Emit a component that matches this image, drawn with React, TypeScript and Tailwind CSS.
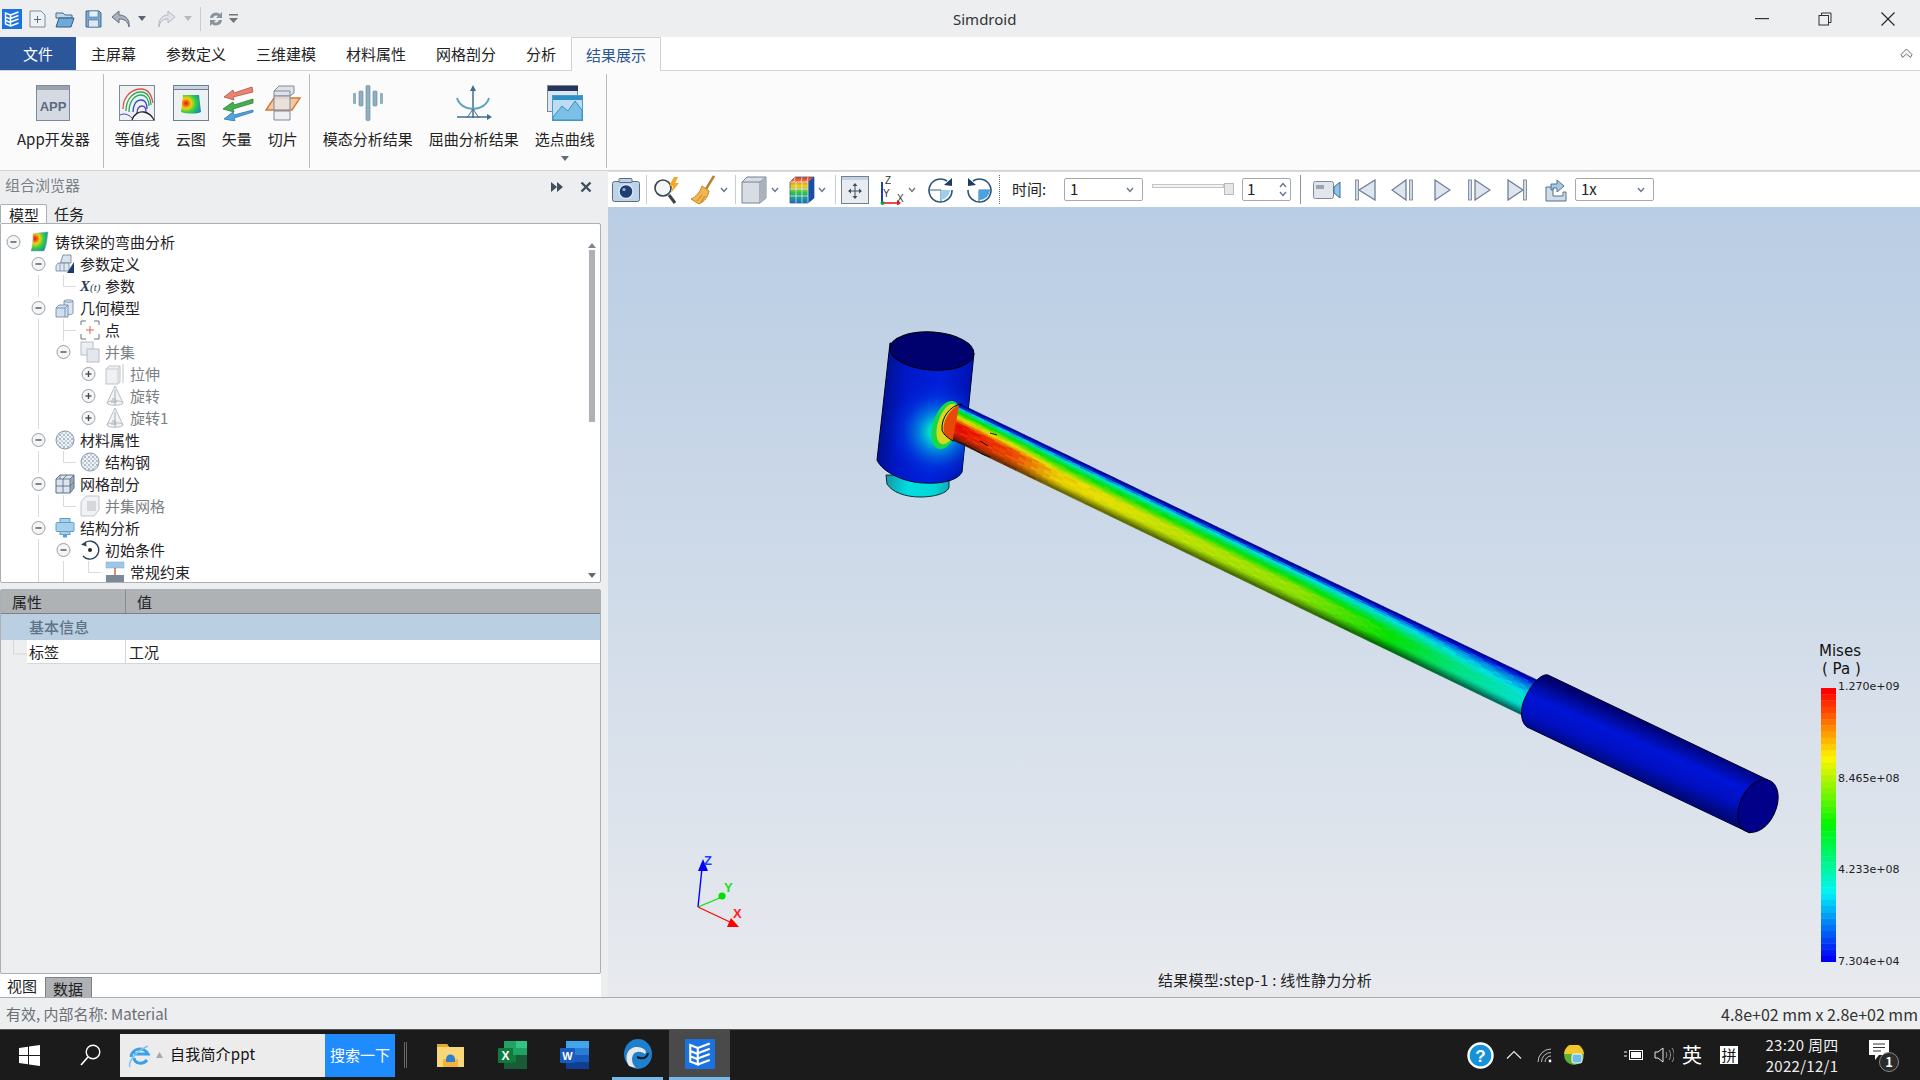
import React from 'react';

type SvgProps = { w: number; h: number; className?: string; children?: React.ReactNode };

const Svg: React.FC<SvgProps> = ({ w, h, className = '', children }) => (
  <svg width={w} height={h} viewBox={`0 0 ${w} ${h}`} className={`shrink-0 ${className}`} fill="none">
    {children}
  </svg>
);

const Chev: React.FC<{ className?: string }> = ({ className = '' }) => (
  <Svg w={8} h={6} className={className}>
    <path d="M1 1l3 3.5L7 1" stroke="#64748b" strokeWidth="1.3" />
  </Svg>
);

/* ---------- stress colours for the model ---------- */
const jet = (v: number, l = 1) => {
  const x = Math.max(0, Math.min(1, v));
  let r = 0;
  let g = 0;
  let b = 0;
  if (x < 0.25) {
    g = x / 0.25;
    b = 1;
  } else if (x < 0.5) {
    g = 1;
    b = 1 - (x - 0.25) / 0.25;
  } else if (x < 0.75) {
    r = (x - 0.5) / 0.25;
    g = 1;
  } else {
    r = 1;
    g = 1 - (x - 0.75) / 0.25;
  }
  return `rgb(${Math.round(r * 235 * l)},${Math.round(g * 225 * l)},${Math.round(b * 225 * l)})`;
};

const lerpTable = (table: number[][], t: number) => {
  for (let i = 1; i < table.length; i++) {
    if (t <= table[i][0]) {
      const [a, av] = table[i - 1];
      const [b, bv] = table[i];
      return av + ((t - a) / (b - a)) * (bv - av);
    }
  }
  return table[table.length - 1][1];
};

const peak = [[0, 1], [0.1, 0.93], [0.18, 0.78], [0.35, 0.72], [0.6, 0.66], [0.75, 0.52], [0.88, 0.36], [1, 0.27]];
const across = [[0, 0], [0.08, 0.04], [0.2, 0.42], [0.35, 0.7], [0.55, 1], [1, 0.96]];

const beamPoint = (t: number, s: number) => {
  const ax = 960 + t * 577;
  const ay = 404 + t * 276;
  const bx = 953 + t * 569;
  const by = 440 + t * 275;
  return [ax + (bx - ax) * s, ay + (by - ay) * s];
};

const beamCells = (() => {
  const cells: { d: string; c: string }[] = [];
  const nt = 90;
  const ns = 18;
  for (let i = 0; i < nt; i++) {
    for (let j = 0; j < ns; j++) {
      const t = (i + 0.5) / nt;
      const s = (j + 0.5) / ns;
      const noise = Math.sin(i * 1.7) * Math.sin(j * 2.3) * 0.025;
      const v = lerpTable(peak, t) * lerpTable(across, s) + noise;
      const light = s > 0.78 ? 1 - ((s - 0.78) / 0.22) * 0.6 : s < 0.1 ? 0.55 + s * 4 : 1;
      const p = [beamPoint(i / nt, j / ns), beamPoint((i + 1) / nt, j / ns), beamPoint((i + 1) / nt, (j + 1) / ns), beamPoint(i / nt, (j + 1) / ns)];
      cells.push({ d: `M${p.map((q) => `${q[0].toFixed(1)},${q[1].toFixed(1)}`).join('L')}Z`, c: jet(v, light) });
    }
  }
  return cells;
})();

const legendBands = Array.from({ length: 44 }, (_, i) => jet(1 - i / 43, 1.09));

/* ---------- the model in the viewport ---------- */
const Model = () => (
  <svg className="absolute left-0 top-0" width={1312} height={790} viewBox="608 207 1312 790" fill="none">
    <defs>
      <linearGradient id="headBody" x1="880" y1="400" x2="975" y2="410" gradientUnits="userSpaceOnUse">
        <stop offset="0" stopColor="#00108a" />
        <stop offset="0.25" stopColor="#0018c8" />
        <stop offset="0.6" stopColor="#0020dc" />
        <stop offset="1" stopColor="#0010a8" />
      </linearGradient>
      <radialGradient id="headHot" cx="938" cy="432" r="52" gradientUnits="userSpaceOnUse">
        <stop offset="0.18" stopColor="#00d8c8" />
        <stop offset="0.34" stopColor="#0098e0" stopOpacity="0.9" />
        <stop offset="0.68" stopColor="#0040e0" stopOpacity="0.5" />
        <stop offset="1" stopColor="#0020d8" stopOpacity="0" />
      </radialGradient>
      <linearGradient id="lower" x1="886" y1="480" x2="950" y2="490" gradientUnits="userSpaceOnUse">
        <stop offset="0" stopColor="#1898a8" />
        <stop offset="0.35" stopColor="#00dce0" />
        <stop offset="0.75" stopColor="#00d8d8" />
        <stop offset="1" stopColor="#10a8b0" />
      </linearGradient>
      <linearGradient id="collar" x1="1658" y1="727" x2="1636" y2="778" gradientUnits="userSpaceOnUse">
        <stop offset="0" stopColor="#00006e" />
        <stop offset="0.16" stopColor="#000a98" />
        <stop offset="0.4" stopColor="#0014d8" />
        <stop offset="0.72" stopColor="#0010c0" />
        <stop offset="1" stopColor="#000878" />
      </linearGradient>
    </defs>

    {/* lower boss */}
    <path d="M886 475 L887 484 C892 492 905 497 920 497 C935 497 948 493 949 487 L949 476 Z" fill="url(#lower)" stroke="#07303a" strokeWidth="1" />

    {/* head cylinder */}
    <path d="M890 343 L877 460 C882 472 905 483 925 483 C943 484 958 480 962 472 L974 353 Z" fill="url(#headBody)" stroke="#000030" strokeWidth="1" />
    <path d="M890 343 L877 460 C882 472 905 483 925 483 C943 484 958 480 962 472 L974 353 Z" fill="url(#headHot)" />
    <ellipse cx="932" cy="351" rx="42" ry="19" transform="rotate(4 932 351)" fill="#00006e" stroke="#000" strokeWidth="1" />
    <ellipse cx="946" cy="425" rx="13" ry="25" transform="rotate(18 946 425)" fill="#18d848" />
    <ellipse cx="948" cy="424" rx="10" ry="21" transform="rotate(18 948 424)" fill="#d8d820" />

    {/* beam */}
    <path d="M960 404 C948 410 940 425 945 435 L953 441 Z" fill="#e84808" />
    {beamCells.map((c, i) => (
      <path key={i} d={c.d} fill={c.c} stroke={c.c} strokeWidth="0.7" />
    ))}
    <path d="M962 404 C950 405 941 418 942 430 C944 436 950 439 953 441" stroke="#000" strokeWidth="1" />
    <path d="M953 440 L970 447 L982 454 L990 457 M980 441 L988 446 M990 433 L997 435" stroke="#111" strokeWidth="1" />

    {/* collar */}
    <path d="M1548 675 L1768 780 L1750 833 L1527 727 C1520 722 1520 708 1525 698 C1531 685 1541 673 1548 675 Z" fill="url(#collar)" stroke="#000030" strokeWidth="1" />
    <ellipse cx="1758" cy="806" rx="18" ry="28" transform="rotate(25 1758 806)" fill="#000088" stroke="#000018" strokeWidth="1" />

    {/* axis triad */}
    <path d="M698 907 L702 868" stroke="#0000ff" strokeWidth="1.4" />
    <path d="M703 859 L708 871 L698 871 Z" fill="#0000ff" />
    <path d="M698 907 L722 897" stroke="#00e000" strokeWidth="1.2" />
    <circle cx="722" cy="896" r="3.6" fill="#00e000" />
    <path d="M698 907 L732 923" stroke="#ff0000" strokeWidth="1.2" />
    <path d="M739 927 L727 927 L731 918 Z" fill="#ff0000" />
    <text x="704" y="865" fontFamily="'Liberation Sans', sans-serif" fontWeight="700" fontSize="13" fill="#2040ff">Z</text>
    <text x="724" y="892" fontFamily="'Liberation Sans', sans-serif" fontWeight="700" fontSize="13" fill="#20e020">Y</text>
    <text x="733" y="918" fontFamily="'Liberation Sans', sans-serif" fontWeight="700" fontSize="13" fill="#ff2020">X</text>
  </svg>
);

/* ---------- quick access + ribbon icons ---------- */
const AppLogo: React.FC<{ size: number; className?: string }> = ({ size, className = '' }) => (
  <svg width={size} height={size} viewBox="0 0 20 20" className={`shrink-0 ${className}`} fill="none">
    <rect width="20" height="20" fill="#1a73e0" />
    <path d="M3.5 4l5 2v11l-5-2zM3.5 8l5 2M3.5 11.5l5 2M8.5 6l8-3M8.5 9.5l8-3M8.5 13l8-3M8.5 17l8-3" stroke="#fff" strokeWidth="1.4" />
  </svg>
);

const RibbonApp = () => (
  <Svg w={36} h={36}>
    <rect x="1.5" y="0.5" width="33" height="35" fill="#d5dae2" stroke="#7d8a9b" />
    <rect x="2" y="1" width="32" height="4" fill="#9aa3ae" />
    <text x="18" y="26" textAnchor="middle" fontFamily="'Liberation Sans', sans-serif" fontSize="13" fontWeight="700" fill="#5a6b80">APP</text>
  </Svg>
);

const RibbonContour = () => (
  <Svg w={36} h={36}>
    <rect x="0.5" y="0.5" width="35" height="35" fill="#eef0f2" stroke="#7d8a9b" />
    <path d="M4 24C4 10 14 4 22 4c8 0 11 8 12 14" stroke="#e05050" strokeWidth="1.3" />
    <path d="M7 26C7 13 15 7 22 7c7 0 10 7 10 13" stroke="#30a850" strokeWidth="1.3" />
    <path d="M10 27C10 16 16 10 22 10c5 0 8 5 8 11" stroke="#28a860" strokeWidth="1.3" />
    <path d="M14 27c0-7 3-12 8-12 4 0 6 4 6 9" stroke="#3050d0" strokeWidth="1.3" />
    <path d="M18 29c0-5 2-8 5-8 3 0 4 3 4 6" stroke="#6040c0" strokeWidth="1.3" />
    <path d="M13 35c2-6 7-9 12-8 5 1 8 4 10 8" fill="#f4f5f6" stroke="#20242c" strokeWidth="1.3" />
    <path d="M1 30c4-2 8-1 12 3" stroke="#4040c0" strokeWidth="1" />
  </Svg>
);

const heatStops = (
  <>
    <stop offset="0" stopColor="#e81010" />
    <stop offset="0.3" stopColor="#f0d010" />
    <stop offset="0.55" stopColor="#30d040" />
    <stop offset="1" stopColor="#1070e0" />
  </>
);

const RibbonCloud = () => (
  <Svg w={36} h={36}>
    <defs>
      <radialGradient id="ribHeat" cx="0.25" cy="0.45" r="0.9">
        {heatStops}
      </radialGradient>
    </defs>
    <rect x="0.5" y="0.5" width="35" height="35" fill="#eef1f4" stroke="#6f7e90" />
    <rect x="1" y="1" width="34" height="3" fill="#c6d4e4" />
    <rect x="1" y="4" width="34" height="1" fill="#6f7e90" />
    <path d="M10 10h16l2 17c-4 2-14 2-20 0z" fill="url(#ribHeat)" />
  </Svg>
);

const RibbonVector = () => (
  <Svg w={36} h={36}>
    <path d="M33 2L15 8l-1-3-9 7 10 3-1-3 20-5z" fill="#ea8472" stroke="#a9564a" strokeWidth="0.8" />
    <path d="M34 14l-19 6-1-3-10 7 11 3-1-3 20-6z" fill="#42b04e" stroke="#2b7f35" strokeWidth="0.8" />
    <path d="M34 25L15 30l-1-3-9 7 11 2-1-3 19-6z" fill="#4ea6e0" stroke="#2f74ab" strokeWidth="0.8" />
  </Svg>
);

const RibbonSlice = () => (
  <Svg w={36} h={36}>
    <path d="M9 6l5-5h15v7l-4 3H9z" fill="#dfe3e8" stroke="#7d8a9b" />
    <path d="M9 6h16v5" stroke="#7d8a9b" />
    <path d="M9 26h16v9H9z" fill="#eceff2" stroke="#7d8a9b" />
    <path d="M1 25L9 13h26l-8 12z" fill="#f3c8a5" stroke="#d27a36" strokeWidth="1.4" />
    <path d="M9 11h16v14H9z" fill="#e7eaee" fillOpacity="0.75" stroke="#7d8a9b" />
  </Svg>
);

const RibbonModal = () => (
  <Svg w={32} h={36}>
    <rect x="14" y="0.5" width="4" height="35" rx="1" fill="#8fb0c0" stroke="#5f8398" strokeWidth="0.6" />
    <rect x="7" y="6" width="4" height="15" rx="1" fill="#8fb0c0" stroke="#5f8398" strokeWidth="0.6" />
    <rect x="21" y="6" width="4" height="15" rx="1" fill="#8fb0c0" stroke="#5f8398" strokeWidth="0.6" />
    <rect x="1" y="8" width="3" height="11" rx="1" fill="#8fb0c0" />
    <rect x="28" y="8" width="3" height="11" rx="1" fill="#8fb0c0" />
  </Svg>
);

const RibbonBuckle = () => (
  <Svg w={36} h={36}>
    <path d="M17 4v29" stroke="#3f6f8c" strokeWidth="1.5" />
    <path d="M17 0l-3 6h6z" fill="#3f6f8c" />
    <path d="M1 32h31" stroke="#3f6f8c" strokeWidth="1.5" />
    <path d="M36 32l-5-3v6z" fill="#3f6f8c" />
    <path d="M1 13c2 7 9 11 16 11s14-4 16-11" stroke="#5ea2c2" strokeWidth="2" />
    <path d="M11 33l6-9 6 9" stroke="#3f6f8c" strokeWidth="1" />
  </Svg>
);

const RibbonCurve = () => (
  <Svg w={36} h={36}>
    <rect x="0.5" y="0.5" width="30" height="26" fill="#d8e6f2" stroke="#7d8a9b" />
    <rect x="1" y="1" width="30" height="5" fill="#24375a" />
    <rect x="5.5" y="10.5" width="30" height="25" fill="#bcdcf2" stroke="#4f9bc8" />
    <rect x="6" y="11" width="29" height="4" fill="#2f8fc8" />
    <path d="M6 32l9-11 6 5 7-10 7 9v10H6z" fill="#7cc0e8" stroke="#3d8fc0" />
  </Svg>
);

/* ---------- tree icons ---------- */
const TreeRoot = () => (
  <Svg w={20} h={22}>
    <defs>
      <radialGradient id="rootHeat" cx="0.25" cy="0.35" r="0.9">
        {heatStops}
      </radialGradient>
    </defs>
    <path d="M3 3c5-1 10-2 15-2-1 6-1 13-4 19H1c2-5 2-11 2-17z" fill="url(#rootHeat)" stroke="#8aa3b8" strokeWidth="0.5" />
  </Svg>
);

const TreeParam = () => (
  <Svg w={20} h={22}>
    <path d="M6 8l2-6h8v8H6z" fill="#d8e3f0" stroke="#6b7f98" strokeWidth="0.8" />
    <path d="M1 18v-5l2-3h11v8z" fill="#dfe8f2" stroke="#6b7f98" strokeWidth="0.8" />
    <path d="M5 10v8M9 10v8" stroke="#6b7f98" strokeWidth="0.7" />
    <path d="M19 9v11h-7z" fill="#1d3b6e" />
  </Svg>
);

const TreeGeom = () => (
  <Svg w={20} h={20}>
    <path d="M9 3c0-1.5 9-1.5 9 0v12c0 1-2 1.5-4 1.5H9z" fill="#dbe6f2" stroke="#6b8098" strokeWidth="0.8" />
    <path d="M9 3c0 1.5 9 1.5 9 0" stroke="#6b8098" strokeWidth="0.8" />
    <path d="M1 10l3-3h9v12H1z" fill="#cfe0f2" stroke="#6b8098" strokeWidth="0.8" />
    <path d="M1 10h9v9M10 10l3-3" stroke="#6b8098" strokeWidth="0.8" />
  </Svg>
);

const TreePoint = () => (
  <Svg w={20} h={22}>
    <path d="M1 6V2h5M14 2h5v4M1 15v5h5M14 20h5v-5" stroke="#6b7280" strokeWidth="1" />
    <path d="M10 7v8M6 11h8" stroke="#c96f4a" strokeWidth="1" />
  </Svg>
);

const TreeUnion = () => (
  <Svg w={20} h={22}>
    <rect x="1" y="1" width="12" height="13" fill="#eceff2" stroke="#b8bec6" />
    <rect x="7" y="8" width="12" height="13" fill="#e4e8ec" stroke="#b8bec6" />
  </Svg>
);

const TreeExtrude = () => (
  <Svg w={20} h={22}>
    <path d="M1 6l3-3h11v16l-2 2H1z" fill="#eef0f2" stroke="#c0c5cb" />
    <path d="M1 6h12v15M13 6l2-3" stroke="#c8cdd2" />
    <path d="M18 1v19" stroke="#c0c5cb" />
  </Svg>
);

const TreeRevolve = () => (
  <Svg w={20} h={22}>
    <path d="M10 1l8 17c0 3-16 3-16 0z" fill="#f2f3f5" stroke="#b8bec6" />
    <path d="M2 18c0-3 16-3 16 0" stroke="#b8bec6" />
    <path d="M10 5v15M7 14h4M6 17h6" stroke="#a8aeb6" />
  </Svg>
);

const TreeMaterial: React.FC = () => (
  <Svg w={20} h={20}>
    <defs>
      <pattern id="matDots" width="4" height="4" patternUnits="userSpaceOnUse">
        <rect width="4" height="4" fill="#eef1f5" />
        <rect width="2" height="2" fill="#aebccc" />
        <rect x="2" y="2" width="2" height="2" fill="#c8d2dc" />
      </pattern>
    </defs>
    <circle cx="10" cy="10" r="9" fill="url(#matDots)" stroke="#8b98a8" />
  </Svg>
);

const TreeMesh = () => (
  <Svg w={20} h={20}>
    <path d="M1 5l4-4h14v13l-4 5H1z" fill="#dbe5f0" stroke="#5f6f86" />
    <path d="M1 5h14v14M15 5l4-4M8 5v14M1 12h14M5 1v4M12 1l-4 4M19 8l-4 4" stroke="#5f6f86" strokeWidth="0.9" />
    <path d="M15 5l4-4v13l-4 5z" fill="#64748b" fillOpacity="0.55" />
  </Svg>
);

const TreeUnionMesh = () => (
  <Svg w={20} h={22}>
    <path d="M1 7l5-6h13v14l-5 6H1z" fill="#f0f2f4" stroke="#c0c5cb" />
    <rect x="7" y="6" width="9" height="10" fill="#d4d8dc" />
  </Svg>
);

const TreeAnalysis = () => (
  <Svg w={20} h={20}>
    <rect x="5" y="0.5" width="10" height="4" fill="#a8d0ec" stroke="#5fa0cc" />
    <rect x="1" y="4.5" width="18" height="9" rx="1" fill="#a8d0ec" stroke="#5fa0cc" />
    <rect x="5" y="13.5" width="10" height="3" fill="#a8d0ec" stroke="#5fa0cc" />
    <rect x="8" y="16.5" width="4" height="3" fill="#5fa0cc" />
  </Svg>
);

const TreeInit = () => (
  <Svg w={20} h={22}>
    <path d="M5 3.5A9 9 0 1 1 3 17" stroke="#2a3f5c" strokeWidth="1.4" />
    <path d="M1 5.5l5-3 0.5 5z" fill="#2a3f5c" />
    <circle cx="10" cy="11" r="2" fill="#1f2937" />
  </Svg>
);

const TreeConstraint = () => (
  <Svg w={20} h={22}>
    <rect x="1" y="1" width="18" height="6" fill="#9cc7e8" stroke="#7fa8c8" strokeWidth="0.5" />
    <path d="M10 7v7" stroke="#d0663a" strokeWidth="1.5" />
    <rect x="1" y="14" width="18" height="7" fill="#7c8a98" />
  </Svg>
);

const XtIcon = () => (
  <span className="w-5 text-left font-['Liberation_Serif',serif] text-[15px] italic leading-none text-[#333a48] shrink-0 whitespace-nowrap">
    <b className="text-[#2b3a55]">X</b>
    <span className="text-[11px]">(t)</span>
  </span>
);

type TreeRow = {
  level: number;
  label: string;
  icon: React.ReactNode;
  exp?: 'minus' | 'plus';
  dim?: boolean;
  guides?: number[];
  elbow?: boolean;
};

const rows: TreeRow[] = [
  { level: 0, label: '铸铁梁的弯曲分析', icon: <TreeRoot />, exp: 'minus' },
  { level: 1, label: '参数定义', icon: <TreeParam />, exp: 'minus' },
  { level: 2, label: '参数', icon: <XtIcon />, guides: [38], elbow: true },
  { level: 1, label: '几何模型', icon: <TreeGeom />, exp: 'minus' },
  { level: 2, label: '点', icon: <TreePoint />, guides: [38, 63], elbow: true },
  { level: 2, label: '并集', icon: <TreeUnion />, exp: 'minus', guides: [38], dim: true },
  { level: 3, label: '拉伸', icon: <TreeExtrude />, exp: 'plus', guides: [38], dim: true },
  { level: 3, label: '旋转', icon: <TreeRevolve />, exp: 'plus', guides: [38], dim: true },
  { level: 3, label: '旋转1', icon: <TreeRevolve />, exp: 'plus', guides: [38], dim: true },
  { level: 1, label: '材料属性', icon: <TreeMaterial />, exp: 'minus' },
  { level: 2, label: '结构钢', icon: <TreeMaterial />, guides: [38], elbow: true },
  { level: 1, label: '网格剖分', icon: <TreeMesh />, exp: 'minus' },
  { level: 2, label: '并集网格', icon: <TreeUnionMesh />, guides: [38], elbow: true, dim: true },
  { level: 1, label: '结构分析', icon: <TreeAnalysis />, exp: 'minus' },
  { level: 2, label: '初始条件', icon: <TreeInit />, exp: 'minus', guides: [38] },
  { level: 3, label: '常规约束', icon: <TreeConstraint />, guides: [38, 63], elbow: true },
];

const Gutter: React.FC<{ row: TreeRow }> = ({ row }) => {
  const w = 29 + 25 * row.level;
  const cx = 12 + 25 * row.level;
  return (
    <Svg w={w} h={22}>
      {(row.guides || []).map((g) => (
        <path key={g} d={`M${g - 0.5} 0V22`} stroke="#d9dadb" />
      ))}
      {row.elbow && <path d={`M${cx + 0.5} 0V11.5H${cx + 13}`} stroke="#d9dadb" />}
      {row.exp && (
        <>
          <circle cx={cx + 0.5} cy={11} r="6.5" fill="#f4f5f6" stroke="#9aa0a6" />
          <path d={`M${cx - 2.5} 11h6`} stroke="#444" strokeWidth="1.3" />
          {row.exp === 'plus' && <path d={`M${cx + 0.5} 8v6`} stroke="#444" strokeWidth="1.3" />}
        </>
      )}
    </Svg>
  );
};

const TreePanel = () => (
  <div className="h-[360px] w-[601px] flex border border-[#acb0b4] rounded-[2px] bg-white">
    <div className="flex-1 pt-[7px] overflow-hidden">
      {rows.map((row) => (
        <div key={row.label + row.level} className="flex items-center h-[22px]">
          <Gutter row={row} />
          <span className="w-5 flex justify-center shrink-0">{row.icon}</span>
          <span className={`ml-[5px] text-[15px] leading-[22px] whitespace-nowrap ${row.dim ? 'text-[#7b7f84]' : 'text-[#1f2328]'}`}>
            {row.label}
          </span>
        </div>
      ))}
    </div>
    <div className="w-[12px] mr-[2px] flex flex-col items-center pt-[19px] pb-[4px]">
      <Svg w={8} h={5} className="mb-[2px]">
        <path d="M4 0l4 5H0z" fill="#7b8794" />
      </Svg>
      <div className="w-[6px] h-[172px] bg-[#aeb2b6]" />
      <Svg w={8} h={5} className="mt-auto">
        <path d="M0 0h8L4 5z" fill="#5f6b78" />
      </Svg>
    </div>
  </div>
);

const PropsPanel = () => (
  <div className="mt-[6px] h-[385px] w-[601px] border border-[#acb0b4] rounded-[2px] text-[15px]">
    <div className="flex h-[24px] bg-[#aeb2b5] border-b border-[#7d8186] items-center text-[#222]">
      <div className="w-[125px] pl-[11px] border-r border-[#888c90] h-full leading-[24px]">属性</div>
      <div className="pl-[11px] leading-[24px]">值</div>
    </div>
    <div className="h-[26px] bg-[#bbcfe2] pl-[28px] leading-[26px] font-medium text-[#5f7386]">基本信息</div>
    <div className="flex h-[24px]">
      <div className="w-[26px] bg-[#eceef0] shrink-0 flex">
        <Svg w={26} h={24}>
          <path d="M12.5 0V14H26" stroke="#d4d6d9" />
        </Svg>
      </div>
      <div className="flex flex-1 bg-white border-b border-[#d4d6d9]">
        <div className="w-[99px] pl-[2px] border-r border-[#d4d6d9] leading-[24px] text-[#222]">标签</div>
        <div className="pl-[3px] leading-[24px] text-[#222]">工况</div>
      </div>
    </div>
  </div>
);

const LeftColumn = () => (
  <div className="w-[608px] shrink-0 flex flex-col bg-[#eceef0]">
    <div className="h-[33px] flex items-center pl-[5px] text-[15px] text-[#7a8086]">
      <span className="-mt-[4px]">组合浏览器</span>
      <Svg w={14} h={12} className="ml-auto -mt-[2px]">
        <path d="M1 1l6 5-6 5zM7 1l6 5-6 5z" fill="#3f4d5e" />
      </Svg>
      <Svg w={12} h={12} className="ml-[16px] mr-[16px] -mt-[2px]">
        <path d="M1.5 1.5l9 9M10.5 1.5l-9 9" stroke="#3f4d5e" strokeWidth="2.4" />
      </Svg>
    </div>
    <div className="h-[19px] flex text-[15px] leading-[19px] text-[#222]">
      <div className="w-[47px] pl-[8px] bg-white border border-b-0 border-[#acb0b4] rounded-t-[2px]">模型</div>
      <div className="ml-[7px]">任务</div>
    </div>
    <TreePanel />
    <PropsPanel />
    <div className="h-[23px] w-[601px] bg-white flex text-[15px] leading-[24px] text-[#222]">
      <div className="ml-[7px]">视图</div>
      <div className="ml-[8px] mt-[3px] w-[47px] pl-[7px] bg-[#aeb2b5] border border-b-0 border-[#7d8186] leading-[21px]">数据</div>
    </div>
  </div>
);

/* ---------- viewport toolbar ---------- */
const Sep: React.FC<{ className?: string }> = ({ className = '' }) => <div className={`w-px h-[29px] bg-[#c8ccd0] shrink-0 ${className}`} />;

const Combo: React.FC<{ label: string; className?: string }> = ({ label, className = '' }) => (
  <div className={`w-[79px] h-[23px] shrink-0 flex items-center pl-[5px] pr-[8px] border border-[#a6aaae] rounded-[2px] text-[15px] text-[#222] ${className}`}>
    <span>{label}</span>
    <Chev className="ml-auto" />
  </div>
);

const NavIcon: React.FC<{ w: number; className?: string; d: string; bars?: number[] }> = ({ w, className = '', d, bars = [] }) => (
  <Svg w={w} h={22} className={className}>
    <path d={d} fill="#dfe5ee" stroke="#6e7f99" strokeWidth="1.3" />
    {bars.map((x) => (
      <rect key={x} x={x} y="1" width="3" height="20" fill="#cfd8e4" stroke="#6e7f99" strokeWidth="0.8" />
    ))}
  </Svg>
);

const Toolbar = () => (
  <div className="h-[36px] shrink-0 flex items-center bg-white text-[15px] border-t border-[#d8dadc]">
    <Svg w={28} h={24} className="ml-[4px]">
      <rect x="0.5" y="3.5" width="27" height="20" rx="2" fill="#bfd3e8" stroke="#596c85" />
      <rect x="7" y="0.5" width="13" height="4" rx="1" fill="#bfd3e8" stroke="#596c85" />
      <circle cx="14" cy="13.5" r="7" fill="#1f3f74" stroke="#dde8f3" strokeWidth="1.4" />
      <circle cx="12" cy="11.5" r="1.6" fill="#8fb4dc" />
    </Svg>
    <Sep className="ml-[6px]" />
    <Svg w={28} h={28} className="ml-[6px]">
      <circle cx="10" cy="12" r="8" fill="#f3f5f6" stroke="#39434e" strokeWidth="1.6" />
      <path d="M16 19l6 8" stroke="#39434e" strokeWidth="3" />
      <path d="M21 1l-5 9h4l-2 7 8-10h-4l3-6z" fill="#f5a623" />
    </Svg>
    <Svg w={25} h={30} className="ml-[9px]">
      <path d="M24 1l-8 13" stroke="#b8802a" strokeWidth="2.4" />
      <path d="M12 11l7 5c-1 6-5 11-10 13L1 24c5-2 9-7 11-13z" fill="#f2b552" stroke="#c48422" />
      <path d="M7 26l5-6M11 27l4-6" stroke="#c48422" />
    </Svg>
    <Chev className="ml-[5px]" />
    <Sep className="ml-[7px]" />
    <Svg w={26} h={28} className="ml-[5px]">
      <path d="M1 6l5-5h19v21l-6 5H1z" fill="#d8dde4" stroke="#77848f" />
      <path d="M1 6h18v21M19 6l6-5" stroke="#77848f" />
      <path d="M19 6l6-5v21l-6 5z" fill="#a8b2bd" />
    </Svg>
    <Chev className="ml-[4px]" />
    <Svg w={26} h={28} className="ml-[10px]">
      <defs>
        <linearGradient id="ccube" x1="0" y1="0" x2="0" y2="1">
          <stop offset="0" stopColor="#e83030" />
          <stop offset="0.35" stopColor="#f0d020" />
          <stop offset="0.6" stopColor="#30c050" />
          <stop offset="1" stopColor="#1070d8" />
        </linearGradient>
      </defs>
      <path d="M1 6l5-5h19v21l-6 5H1z" fill="url(#ccube)" stroke="#3a6080" strokeWidth="0.8" />
      <path d="M19 6l6-5v21l-6 5z" fill="#1850a8" />
      <path d="M1 6h18v21M7 6v21M13 6v21M1 13h18M1 20h18M6 1l-1 5M13 1l-1 5M19 1l-1 5" stroke="#eef2f6" strokeWidth="0.7" />
    </Svg>
    <Chev className="ml-[3px]" />
    <Sep className="ml-[9px]" />
    <Svg w={28} h={28} className="ml-[5px]">
      <rect x="0.5" y="0.5" width="27" height="27" fill="#e8ecf1" stroke="#71808f" />
      <rect x="1" y="1" width="26" height="3" fill="#c4d2e0" />
      <path d="M14 8v14M8 15h12" stroke="#3d4c5d" />
      <path d="M14 7l-2.5 3h5zM14 23l-2.5-3h5zM7 15l3-2.5v5zM21 15l-3-2.5v5z" fill="#3d4c5d" />
    </Svg>
    <Svg w={24} h={30} className="ml-[11px]">
      <path d="M2 7v21" stroke="#1c3fb8" strokeWidth="2" />
      <path d="M2 28h16" stroke="#e02020" strokeWidth="1.6" />
      <path d="M21 28l-4-3v6z" fill="#e02020" />
      <circle cx="2.5" cy="28" r="2" fill="#10a040" />
      <text x="5" y="9" fontSize="10" fontFamily="'Liberation Sans', sans-serif" fill="#333">Z</text>
      <text x="3" y="22" fontSize="10" fontFamily="'Liberation Sans', sans-serif" fill="#333">Y</text>
      <text x="17" y="27" fontSize="10" fontFamily="'Liberation Sans', sans-serif" fill="#333">X</text>
    </Svg>
    <Chev className="ml-[4px]" />
    <Svg w={25} h={26} className="ml-[12px]">
      <path d="M19 4A11.5 11.5 0 1 0 24 13" stroke="#2a5578" strokeWidth="1.6" />
      <path d="M24 1v8l-8-1z" fill="#1c3d66" />
      <path d="M1.5 13H13v11" stroke="#2a5578" strokeWidth="0.9" />
      <path d="M13 13h9c0 5-4 9-9 10z" fill="#9fcdee" />
    </Svg>
    <Svg w={26} h={26} className="ml-[13px]">
      <path d="M7 4A11.5 11.5 0 1 1 2 13" stroke="#2a5578" strokeWidth="1.6" />
      <path d="M2 1v8l8-1z" fill="#1c3d66" />
      <path d="M24.5 13H13v11" stroke="#2a5578" strokeWidth="0.9" />
      <path d="M13 13h11c0 5-5 10-11 10z" fill="#4aa3e0" />
    </Svg>
    <div className="ml-[7px] w-px h-[29px] border-l border-dotted border-[#666] shrink-0" />
    <span className="ml-[12px] w-[34px] text-[#222] whitespace-nowrap">时间:</span>
    <Combo label="1" className="ml-[18px]" />
    <div className="ml-[9px] w-[82px] h-[14px] flex items-start shrink-0">
      <div className="flex-1 h-[4px] mt-[1px] border border-[#c4c6c8] bg-[#f2f2f2]" />
      <div className="w-[10px] h-[12px] bg-[#e6e7e8] border border-[#b8babc]" />
    </div>
    <div className="ml-[8px] w-[49px] h-[23px] shrink-0 flex items-center pl-[4px] pr-[3px] border border-[#a6aaae] rounded-[2px] text-[#222]">
      <span>1</span>
      <div className="ml-auto flex flex-col gap-[3px]">
        <Chev className="rotate-180" />
        <Chev />
      </div>
    </div>
    <div className="ml-[9px] w-px h-[29px] bg-[#8f9498] shrink-0" />
    <Svg w={28} h={20} className="ml-[12px]">
      <rect x="0.5" y="1.5" width="20" height="17" rx="2" fill="#e2e6ec" stroke="#7d8a9b" />
      <rect x="3" y="5" width="8" height="4" fill="#9aa5b2" />
      <path d="M21 7l6-5v16l-6-5z" fill="#8fc4e8" stroke="#3a6d99" />
    </Svg>
    <NavIcon w={21} className="ml-[14px]" d="M20 1v20L4 11z" bars={[0.5]} />
    <NavIcon w={23} className="ml-[15px]" d="M15 1v20L1 11z" bars={[18.5]} />
    <NavIcon w={17} className="ml-[20px]" d="M1 1v20l15-10z" />
    <NavIcon w={23} className="ml-[17px]" d="M7 1v20l15-10z" bars={[0.5]} />
    <NavIcon w={20} className="ml-[16px]" d="M1 1v20l15-10z" bars={[16.5]} />
    <Svg w={23} h={24} className="ml-[17px]">
      <path d="M2 9h7v9h10v-4h3v9H2z" fill="#cfdcea" stroke="#55708c" />
      <path d="M7 12V6h6V2l7 6-7 6v-4H9v2z" fill="#a9c8e4" stroke="#55708c" />
    </Svg>
    <Combo label="1x" className="ml-[8px]" />
  </div>
);

const Viewport = () => (
  <div className="relative flex-1 bg-gradient-to-b from-[#b9cde4] to-[#e8eaee] overflow-hidden">
    <Model />
    <div className="absolute left-[1211px] top-[435px] flex flex-col text-[#111] font-['DejaVu_Sans',sans-serif]">
      <div className="text-[15px] leading-[18px]">Mises</div>
      <div className="text-[15px] leading-[18px] pl-[3px]">( Pa )</div>
      <div className="flex mt-[10px] h-[274px]">
        <svg width={15} height={274} viewBox="0 0 15 44" preserveAspectRatio="none" className="ml-[2px] shrink-0">
          {legendBands.map((c, i) => (
            <rect key={i} x="0" y={i} width="15" height="1.05" fill={c} />
          ))}
        </svg>
        <div className="ml-[2px] -mt-[8px] h-[289px] flex flex-col justify-between text-[11px] leading-[14px] text-[#222]">
          <span>1.270e+09</span>
          <span>8.465e+08</span>
          <span>4.233e+08</span>
          <span>7.304e+04</span>
        </div>
      </div>
    </div>
    <div className="absolute left-[550px] top-[761px] text-[15px] leading-[24px] tracking-[0.28px] text-[#222] whitespace-nowrap">结果模型:step-1 : 线性静力分析</div>
  </div>
);

/* ---------- top of the window ---------- */
const TitleBar = () => (
  <div className="h-[37px] shrink-0 relative flex items-center bg-[#eceef0]">
    <AppLogo size={20} className="ml-[2px]" />
    <Svg w={17} h={18} className="ml-[7px]">
      <path d="M1 1h11l4 4v12H1z" fill="#eef2f6" stroke="#7d8a9b" />
      <path d="M8.5 6v7M5 9.5h7" stroke="#5a6a7c" />
    </Svg>
    <Svg w={20} h={18} className="ml-[9px]">
      <path d="M1 3h7l2 2h7v3H1z" fill="#c3d6e8" stroke="#47688c" />
      <path d="M1 17l3-9h15l-3 9z" fill="#70a8d8" stroke="#2f5f8c" />
    </Svg>
    <Svg w={17} h={18} className="ml-[10px]">
      <path d="M1 1h13l2 2v14H1z" fill="#7fa8d0" stroke="#3e6a98" />
      <rect x="4" y="1" width="9" height="6" fill="#e8eff6" stroke="#3e6a98" strokeWidth="0.6" />
      <rect x="3.5" y="10" width="10" height="7" fill="#dfe8f1" stroke="#3e6a98" strokeWidth="0.6" />
    </Svg>
    <Svg w={20} h={18} className="ml-[9px]">
      <path d="M8 1L1 7l7 6V9c5 0 9 2 10 8 1-7-3-12-10-12z" fill="#aab1ba" stroke="#65707d" />
    </Svg>
    <Svg w={8} h={5} className="ml-[7px]">
      <path d="M0 0h8L4 5z" fill="#5b6570" />
    </Svg>
    <Svg w={18} h={18} className="ml-[12px]">
      <path d="M10 1l7 6-7 6V9C5 9 2 11 1 17 0 10 4 5 10 5z" fill="#dfe2e6" stroke="#b4b9bf" />
    </Svg>
    <Svg w={8} h={5} className="ml-[8px]">
      <path d="M0 0h8L4 5z" fill="#b5bac0" />
    </Svg>
    <div className="ml-[8px] w-px h-[24px] bg-[#c8ccd0] shrink-0" />
    <Svg w={16} h={18} className="ml-[7px]">
      <path d="M2 8a6 6 0 0 1 10-4l2-2v6H8l2-2a3.5 3.5 0 0 0-5 2zM14 10a6 6 0 0 1-10 4l-2 2v-6h6l-2 2a3.5 3.5 0 0 0 5-2z" fill="#8b939c" />
    </Svg>
    <Svg w={9} h={10} className="ml-[5px]">
      <path d="M0 0h9v1.5H0zM0 4h9L4.5 9z" fill="#6e7780" />
    </Svg>
    <span className="absolute left-[953px] top-[8px] text-[15px] leading-[22px] text-[#333] font-['Noto_Sans','Noto_Sans_CJK_SC',sans-serif]">Simdroid</span>
    <div className="ml-auto flex items-center">
      <Svg w={14} h={2} className="mr-[49px]">
        <rect width="14" height="1.2" fill="#333" />
      </Svg>
      <Svg w={14} h={14} className="mr-[49px]">
        <path d="M3.5 3V1h9.5v9.5h-2.5" stroke="#333" />
        <rect x="1" y="3.5" width="9.5" height="9.5" stroke="#333" />
      </Svg>
      <Svg w={14} h={14} className="mr-[25px]">
        <path d="M0.5 0.5l13 13M13.5 0.5l-13 13" stroke="#222" strokeWidth="1.1" />
      </Svg>
    </div>
  </div>
);

const tabs = ['主屏幕', '参数定义', '三维建模', '材料属性', '网格剖分', '分析'];

const TabRow = () => (
  <div className="h-[33px] shrink-0 flex items-stretch bg-white text-[15px] leading-[33px] text-[#222] relative z-10">
    <div className="w-[76px] bg-[#2b579a] text-white text-center">文件</div>
    {tabs.map((t) => (
      <div key={t} className="px-[15px]">{t}</div>
    ))}
    <div className="px-[14px] h-[34px] bg-[#fbfbfb] border border-b-0 border-[#d0d2d4] text-[#2b579a]">结果展示</div>
    <Svg w={13} h={11} className="ml-auto mr-[7px] mt-[11px]">
      <path d="M6.5 1L12 6.5 10.5 9.5 6.5 6 2.5 9.5 1 6.5z" fill="#f4f5f6" stroke="#6b7178" />
    </Svg>
  </div>
);

const RibbonBtn: React.FC<{ label: string; icon: React.ReactNode; more?: boolean }> = ({ label, icon, more }) => (
  <div className="relative flex flex-col items-center px-2 text-[15px] text-[#222]">
    <div className="w-0 h-[36px] mt-[14px] flex items-center justify-center">{icon}</div>
    <div className="mt-[8px] leading-[20px] whitespace-nowrap">{label}</div>
    {more && (
      <Svg w={8} h={5} className="mt-[7px]">
        <path d="M0 0h8L4 5z" fill="#5f6b78" />
      </Svg>
    )}
  </div>
);

const RibbonSep = () => <div className="w-px h-[94px] my-[3px] bg-[#b8bbbe] shrink-0" />;

const Ribbon = () => (
  <div className="h-[101px] shrink-0 flex items-start bg-[#fbfbfb] border-y border-[#d0d2d4]">
    <div className="flex pl-[9px] pr-[5px]">
      <RibbonBtn label="App开发器" icon={<RibbonApp />} />
    </div>
    <RibbonSep />
    <div className="flex pl-[3px] pr-[3px]">
      <RibbonBtn label="等值线" icon={<RibbonContour />} />
      <RibbonBtn label="云图" icon={<RibbonCloud />} />
      <RibbonBtn label="矢量" icon={<RibbonVector />} />
      <RibbonBtn label="切片" icon={<RibbonSlice />} />
    </div>
    <RibbonSep />
    <div className="flex pl-[5px] pr-[3px]">
      <RibbonBtn label="模态分析结果" icon={<RibbonModal />} />
      <RibbonBtn label="屈曲分析结果" icon={<RibbonBuckle />} />
      <RibbonBtn label="选点曲线" icon={<RibbonCurve />} more />
    </div>
    <RibbonSep />
  </div>
);

/* ---------- status + windows taskbar ---------- */
const StatusBar = () => (
  <div className="h-[32px] shrink-0 flex items-center justify-between pl-[6px] pr-[2px] bg-[#eceef0] border-t border-[#a8acb0] text-[15px]">
    <span className="text-[#6b6f74] mt-[1px]">有效, 内部名称: Material</span>
    <span className="text-[#333] text-[16px] mt-[1px]">4.8e+02 mm x 2.8e+02 mm</span>
  </div>
);

const Taskbar = () => (
  <div className="h-[51px] shrink-0 flex items-center bg-[#1b1b1b] text-white border-t border-[#555]">
    <Svg w={21} h={21} className="ml-[19px]">
      <path d="M0 3l9-1.3V10H0zM10 1.5L21 0v10H10zM0 11h9v8.3L0 18zM10 11h11v10l-11-1.5z" fill="#fff" />
    </Svg>
    <Svg w={21} h={22} className="ml-[40px]">
      <circle cx="13" cy="8" r="6.8" stroke="#fff" strokeWidth="1.4" />
      <path d="M8 13L1 21" stroke="#fff" strokeWidth="1.6" />
    </Svg>
    <div className="ml-[19px] w-[275px] h-[43px] shrink-0 flex items-center bg-[#ececec]">
      <Svg w={24} h={26} className="ml-[8px]">
        <path d="M3 15a9 9 0 0 1 17-3H6M6 16c1 6 9 7 13 2" stroke="#3aa0ea" strokeWidth="3" />
        <path d="M2 25c-2-4 4-15 18-21" stroke="#7cc4f4" strokeWidth="1.5" />
      </Svg>
      <Svg w={7} h={6} className="ml-[4px]">
        <path d="M3.5 0L7 6H0z" fill="#a8a8a8" />
      </Svg>
      <span className="ml-[7px] -mt-[2px] text-[15px] tracking-[0.2px] text-[#111] whitespace-nowrap">自我简介ppt</span>
      <div className="ml-auto w-[70px] h-full bg-[#1e8cff] text-center text-[15px] leading-[41px]">搜索一下</div>
    </div>
    <div className="ml-[9px] w-[3px] h-[26px] shrink-0 border-x border-[#666]" />
    <Svg w={27} h={26} className="ml-[30px]">
      <path d="M0 2h10l2 3h15v20H0z" fill="#f8d77a" />
      <path d="M0 2h10l2 3H0z" fill="#e5a82c" />
      <rect x="6" y="17" width="15" height="8" fill="#f2b33a" />
      <path d="M9 20v-3a4.5 4.5 0 0 1 9 0v3z" fill="#2d7fd0" />
    </Svg>
    <Svg w={29} h={28} className="ml-[34px]">
      <rect x="6" y="0" width="23" height="28" rx="1" fill="#21a366" />
      <rect x="18" y="0" width="11" height="7" fill="#33c481" />
      <rect x="6" y="14" width="12" height="7" fill="#107c41" />
      <rect x="18" y="14" width="11" height="7" fill="#185c37" />
      <rect x="6" y="21" width="23" height="7" fill="#185c37" />
      <rect x="0" y="7" width="15" height="15" rx="1" fill="#0f7a3e" />
      <text x="7.5" y="19" textAnchor="middle" fontSize="12" fontWeight="700" fontFamily="'Liberation Sans', sans-serif" fill="#fff">X</text>
    </Svg>
    <Svg w={29} h={28} className="ml-[33px]">
      <rect x="6" y="0" width="23" height="28" rx="1" fill="#2b7cd3" />
      <rect x="6" y="0" width="23" height="7" fill="#41a5ee" />
      <rect x="6" y="14" width="23" height="7" fill="#185abd" />
      <rect x="6" y="21" width="23" height="7" fill="#103f91" />
      <rect x="0" y="7" width="15" height="15" rx="1" fill="#185abd" />
      <text x="7.5" y="19" textAnchor="middle" fontSize="11" fontWeight="700" fontFamily="'Liberation Sans', sans-serif" fill="#fff">W</text>
    </Svg>
    <div className="ml-[23px] w-[51px] h-full shrink-0 flex flex-col items-center justify-center relative border-b-[3px] border-[#76b9ed]">
      <Svg w={30} h={30}>
        <ellipse cx="15" cy="15" rx="14" ry="15" fill="#1f7fcf" />
        <path d="M6 27C0 16 6 8 14 8c6 0 11 4 8 7-4-3-10-3-12 1-2 4-1 9 3 13z" fill="#e6e8ea" />
        <path d="M14 18c4 2 10 2 11-4" stroke="#1b1b1b" strokeWidth="2" />
      </Svg>
    </div>
    <div className="ml-[6px] w-[61px] h-full shrink-0 flex items-center justify-center bg-[#4a4a4a] border-b-[3px] border-[#76b9ed]">
      <AppLogo size={30} />
    </div>
    <div className="ml-auto flex items-center pr-[21px]">
      <Svg w={27} h={27}>
        <circle cx="13.5" cy="13.5" r="12" fill="#1592d8" stroke="#fff" strokeWidth="2.4" />
        <text x="13.5" y="19.5" textAnchor="middle" fontSize="17" fontWeight="700" fontFamily="'Liberation Sans', sans-serif" fill="#fff">?</text>
      </Svg>
      <Svg w={16} h={10} className="ml-[12px]">
        <path d="M1 8.5l7-7 7 7" stroke="#e8e8e8" strokeWidth="1.2" />
      </Svg>
      <Svg w={15} h={15} className="ml-[15px]">
        <path d="M1 14A13 13 0 0 1 14 1M4.5 14A9.5 9.5 0 0 1 14 4.5M8 14A6 6 0 0 1 14 8" stroke="#bdbdbd" strokeWidth="1" />
        <circle cx="13" cy="13" r="1.4" fill="#fff" />
      </Svg>
      <Svg w={20} h={20} className="ml-[12px]">
        <circle cx="10" cy="10" r="10" fill="#5cae35" />
        <path d="M0 9a10 10 0 0 1 20 0z" fill="#f0c82c" />
        <rect x="8" y="9" width="10" height="9" rx="2" fill="#6fbde8" stroke="#fff" />
      </Svg>
      <Svg w={20} h={12} className="ml-[40px]">
        <path d="M0 3h3M0 7h3" stroke="#fff" />
        <rect x="5.5" y="1.5" width="13" height="9" stroke="#fff" />
        <rect x="7" y="3" width="10" height="6" fill="#fff" />
      </Svg>
      <Svg w={20} h={16} className="ml-[10px]">
        <path d="M1 5h3l5-4v14l-5-4H1z" stroke="#e8e8e8" />
        <path d="M12 5c1 2 1 4 0 6M15 3c2 3 2 7 0 10M18 1c3 4 3 10 0 14" stroke="#9a9a9a" />
      </Svg>
      <span className="ml-[8px] w-[20px] text-[20px] leading-[24px]">英</span>
      <span className="ml-[18px] w-[18px] h-[18px] bg-white text-[#111] text-[15px] leading-[18px] text-center">拼</span>
      <div className="ml-[27px] w-[74px] flex flex-col items-center text-[15px] leading-[21px] tracking-[0.3px] whitespace-nowrap text-[#eee]">
        <span>23:20 周四</span>
        <span>2022/12/1</span>
      </div>
      <div className="ml-[30px] w-[30px] h-[30px] relative">
        <Svg w={20} h={21}>
          <path d="M0 0h20v15H10l-4 5v-5H0z" fill="#fff" />
          <path d="M4 4h12M4 7.5h12M4 11h8" stroke="#333" />
        </Svg>
        <div className="absolute right-0 bottom-[-2px] w-[20px] h-[20px] rounded-full bg-[#2a2a2a] border border-[#888] text-center text-[13px] leading-[18px] font-bold">1</div>
      </div>
    </div>
  </div>
);

export default function App() {
  return (
    <div className="w-[1920px] h-[1080px] flex flex-col overflow-hidden font-['Noto_Sans_CJK_SC','Noto_Sans',sans-serif] bg-[#eceef0]">
      <TitleBar />
      <TabRow />
      <Ribbon />
      <div className="flex-1 flex min-h-0">
        <LeftColumn />
        <div className="flex-1 flex flex-col min-w-0">
          <Toolbar />
          <Viewport />
        </div>
      </div>
      <StatusBar />
      <Taskbar />
    </div>
  );
}
